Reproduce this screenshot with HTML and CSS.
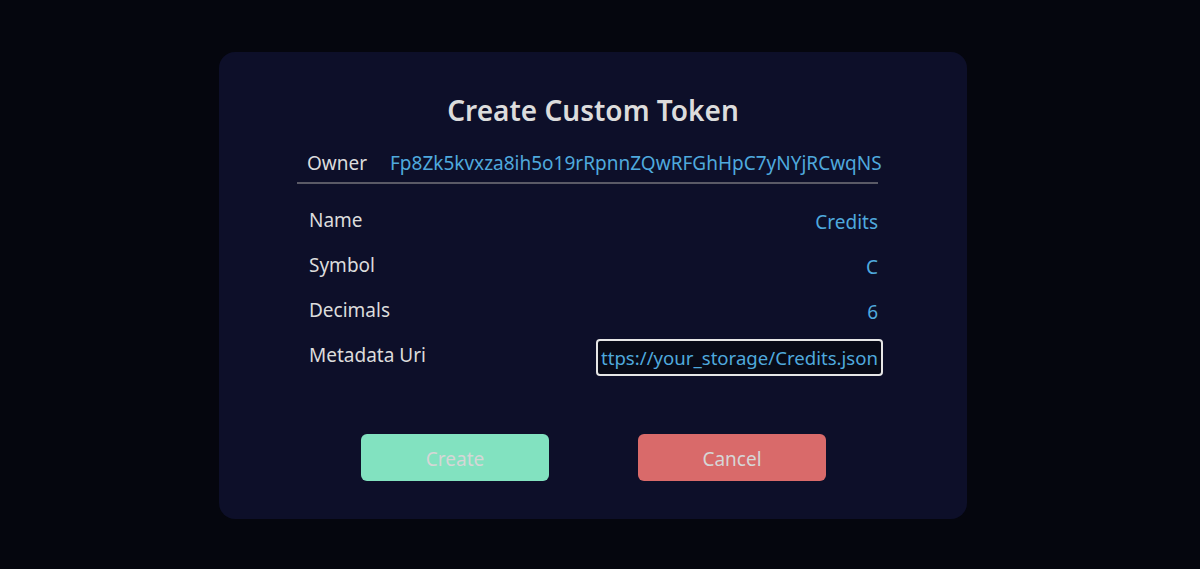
FILE: index.html
```html
<!DOCTYPE html>
<html>
<head>
<meta charset="utf-8">
<link rel="stylesheet" href="styles.css">
</head>
<body>
<div class="card">
  <h1 class="title">Create Custom Token</h1>
  <div class="form">
    <div class="owner">
      <span class="owner-label">Owner</span>
      <span class="owner-value">Fp8Zk5kvxza8ih5o19rRpnnZQwRFGhHpC7yNYjRCwqNS</span>
    </div>
    <div class="rows">
      <div class="row"><span class="label">Name</span><span class="value">Credits</span></div>
      <div class="row"><span class="label">Symbol</span><span class="value">C</span></div>
      <div class="row"><span class="label">Decimals</span><span class="value">6</span></div>
      <div class="row"><span class="label">Metadata Uri</span><span class="value input"><span class="scroll">ttps://your_storage/Credits.json</span></span></div>
    </div>
  </div>
  <div class="buttons">
    <button class="btn create">Create</button>
    <button class="btn cancel">Cancel</button>
  </div>
</div>
</body>
</html>
```
FILE: styles.css
```css
html, body {
  margin: 0;
  padding: 0;
  background: #05060e;
  height: 100%;
}
body {
  font-family: "Noto Sans", "Open Sans", sans-serif;
  color: #dcdcdc;
  padding-top: 52px;
  box-sizing: border-box;
}
.card {
  width: 748px;
  height: 467px;
  margin-left: 219px;
  background: #0d0f29;
  border-radius: 16px;
  box-sizing: border-box;
  padding-top: 89px;
  position: relative;
}
.title {
  position: absolute;
  top: 38px;
  left: 0;
  right: 0;
  margin: 0;
  text-align: center;
  font-size: 28px;
  font-weight: 600;
  line-height: 40px;
  color: #dcdcdc;
}
.form {
  width: 581px;
  margin-left: 78px;
}
.owner {
  display: flex;
  align-items: center;
  height: 43px;
  border-bottom: 2px solid #5a5a66;
  font-size: 19px;
  padding-left: 10px;
  padding-top: 2px;
  box-sizing: border-box;
  white-space: nowrap;
}
.owner-label {
  width: 83px;
  flex-shrink: 0;
  color: #dcdcdc;
}
.owner-value {
  color: #4fa9dd;
}
.rows {
  display: flex;
  flex-direction: column;
  gap: 9px;
  padding-top: 20px;
}
.row {
  display: flex;
  justify-content: space-between;
  align-items: center;
  height: 36px;
  font-size: 19px;
  padding-left: 12px;
}
.label {
  color: #dcdcdc;
  margin-top: -4px;
}
.value {
  color: #4fa9dd;
}
.input {
  width: 287px;
  height: 37px;
  box-sizing: border-box;
  border: 2px solid #e6e6e6;
  border-radius: 4px;
  background: #080a17;
  margin-right: -5px;
  display: flex;
  align-items: center;
  justify-content: flex-end;
  padding-right: 3px;
  overflow: hidden;
  white-space: nowrap;
  font-size: 18.6px;
}
.buttons {
  display: flex;
  gap: 89px;
  margin-top: 59px;
  margin-left: 142px;
}
.btn {
  width: 188px;
  height: 47px;
  border: none;
  border-radius: 6px;
  font-family: "Noto Sans", "Open Sans", sans-serif;
  font-size: 19px;
  color: #d6d6d6;
  cursor: pointer;
  padding: 2px 0 0;
}
.create {
  background: #82e2c0;
}
.cancel {
  background: #d96a6a;
}
```
